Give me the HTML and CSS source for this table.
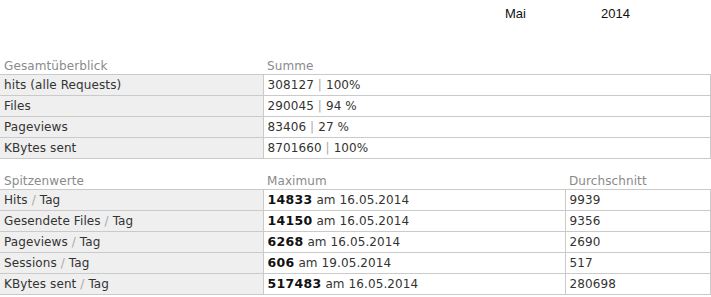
FILE: index.html
```html
<!DOCTYPE html>
<html>
<head>
<meta charset="utf-8">
<link rel="stylesheet" href="styles.css">
</head>
<body>
<div class="period">
  <span class="month">Mai</span>
  <span class="year">2014</span>
</div>

<table class="stats">
  <colgroup><col class="c1"><col></colgroup>
  <tr class="head"><th>Gesamtüberblick</th><th>Summe</th></tr>
  <tr><td class="label">hits (alle Requests)</td><td>308127 <span class="sep">|</span> 100%</td></tr>
  <tr><td class="label">Files</td><td>290045 <span class="sep">|</span> 94 %</td></tr>
  <tr><td class="label">Pageviews</td><td>83406 <span class="sep">|</span> 27 %</td></tr>
  <tr><td class="label">KBytes sent</td><td>8701660 <span class="sep">|</span> 100%</td></tr>
</table>

<table class="stats second">
  <colgroup><col class="c1"><col class="c2"><col></colgroup>
  <tr class="head"><th>Spitzenwerte</th><th>Maximum</th><th>Durchschnitt</th></tr>
  <tr><td class="label">Hits <span class="sep">/</span> Tag</td><td><b>14833</b> am 16.05.2014</td><td>9939</td></tr>
  <tr><td class="label">Gesendete Files <span class="sep">/</span> Tag</td><td><b>14150</b> am 16.05.2014</td><td>9356</td></tr>
  <tr><td class="label">Pageviews <span class="sep">/</span> Tag</td><td><b>6268</b> am 16.05.2014</td><td>2690</td></tr>
  <tr><td class="label">Sessions <span class="sep">/</span> Tag</td><td><b>606</b> am 19.05.2014</td><td>517</td></tr>
  <tr><td class="label">KBytes sent <span class="sep">/</span> Tag</td><td><b>517483</b> am 16.05.2014</td><td>280698</td></tr>
</table>
</body>
</html>
```
FILE: styles.css
```css
html, body {
  margin: 0;
  padding: 0;
  background: #fff;
}
body {
  width: 711px;
}
.period {
  display: flex;
  height: 57px;
  padding-top: 6px;
  box-sizing: border-box;
  font-family: "Liberation Sans", Arial, sans-serif;
  font-size: 13px;
  color: #111;
}
.month {
  margin-left: 505px;
  width: 96px;
}
.stats {
  border-collapse: collapse;
  width: 711px;
  font-family: "DejaVu Sans", Verdana, sans-serif;
  font-size: 12px;
  letter-spacing: 0.1px;
  color: #333;
  table-layout: fixed;
}
.stats .c1 { width: 263px; }
.stats .c2 { width: 302px; }
.stats th {
  text-align: left;
  font-weight: normal;
  color: #8a8a8a;
  height: 17px;
  line-height: 14px;
  padding: 0 4px 1px;
  box-sizing: border-box;
  vertical-align: bottom;
}
.stats td {
  border: 1px solid #cacaca;
  height: 21px;
  line-height: 14px;
  padding: 0 4px;
  box-sizing: border-box;
  vertical-align: middle;
}
.stats td.label {
  background: #efefef;
  border-left: 0;
}
.stats .sep {
  color: #aaa;
}
.stats b {
  color: #111;
  font-size: 12.5px;
  letter-spacing: 0.3px;
}
.second {
  margin-top: 14px;
}
```
